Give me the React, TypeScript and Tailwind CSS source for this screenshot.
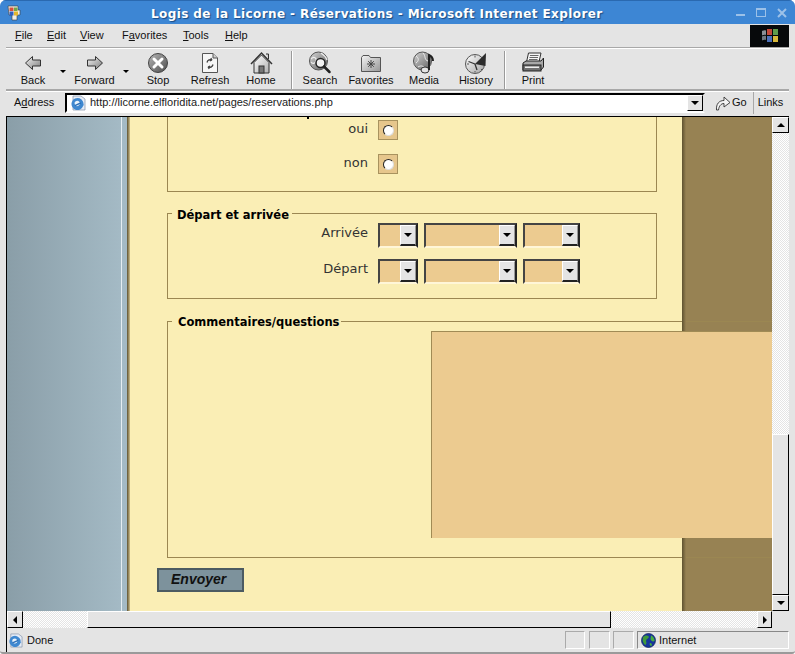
import React from 'react';

const ui = "font-['Liberation_Sans',Arial,sans-serif]";
const page = "font-['DejaVu_Sans',Verdana,sans-serif]";
const dither = 'bg-[repeating-conic-gradient(#e4e4e4_0_25%,#ffffff_0_50%)] bg-[length:2px_2px]';
const raised = 'bg-[#e4e4e4] border border-t-white border-l-white border-r-black border-b-black';

const Grad: React.FC<{ id: string; a?: string; b?: string }> = ({ id, a = '#f4f4f4', b = '#7c7c7c' }) => (
  <defs>
    <linearGradient id={id} x1="0" y1="0" x2="1" y2="1">
      <stop offset="0" stopColor={a} />
      <stop offset="1" stopColor={b} />
    </linearGradient>
  </defs>
);

const BackIcon = () => (
  <svg width="24" height="24" viewBox="0 0 24 24">
    <Grad id="bk" />
    <path d="M4.500 12 L11.500 5.500 V9 H19.500 V15 H11.500 V18.500 Z" fill="url(#bk)" stroke="#333" strokeWidth="1" />
  </svg>
);

const ForwardIcon = () => (
  <svg width="24" height="24" viewBox="0 0 24 24">
    <Grad id="fw" />
    <path d="M19.500 12 L12.500 5.500 V9 H4.500 V15 H12.500 V18.500 Z" fill="url(#fw)" stroke="#333" strokeWidth="1" />
  </svg>
);

const StopIcon = () => (
  <svg width="24" height="24" viewBox="0 0 24 24">
    <Grad id="st" a="#b8b8b8" b="#4c4c4c" />
    <circle cx="12" cy="12" r="9.500" fill="url(#st)" stroke="#444" />
    <path d="M8 8 L16 16 M16 8 L8 16" stroke="#fff" strokeWidth="3" strokeLinecap="round" />
  </svg>
);

const RefreshIcon = () => (
  <svg width="24" height="24" viewBox="0 0 24 24">
    <path d="M4.500 2.500 H15 L19.500 7 V21.500 H4.500 Z" fill="#f6f6f6" stroke="#555" />
    <path d="M15 2.500 V7 H19.500" fill="#cfcfcf" stroke="#555" />
    <path d="M9 11.500 C9.500 9 12 8 14 9 M14 9 L12.800 7.200 M14 9 L11.800 10" fill="none" stroke="#444" strokeWidth="1.300" />
    <path d="M15 13.500 C14.500 16 12 17 10 16 M10 16 L11.300 17.800 M10 16 L12.200 15" fill="none" stroke="#444" strokeWidth="1.300" />
  </svg>
);

const HomeIcon = () => (
  <svg width="24" height="24" viewBox="0 0 24 24">
    <Grad id="hm" a="#ffffff" b="#b0b0b0" />
    <path d="M5 11.500 V22 H20 V11.500 L12.500 4 Z" fill="url(#hm)" stroke="#333" />
    <path d="M2 13 L12.500 2 L23 13" fill="none" stroke="#333" strokeWidth="1.500" />
    <path d="M17 3 H19.500 V8" fill="#ccc" stroke="#333" />
    <rect x="10" y="15" width="5" height="7" fill="#777" stroke="#333" />
  </svg>
);

const SearchIcon = () => (
  <svg width="24" height="24" viewBox="0 0 24 24">
    <Grad id="se" a="#d8d8d8" b="#5c5c5c" />
    <circle cx="10.500" cy="10" r="9" fill="url(#se)" stroke="#555" />
    <path d="M3 8 C6 5 9 7 8 10 C7 13 4 13 3 11 M13 2 C16 4 18 6 19 9" fill="none" stroke="#eee" strokeWidth="1.200" />
    <circle cx="12.500" cy="12" r="4.500" fill="#f2f2f2" stroke="#222" strokeWidth="1.500" />
    <path d="M16 15.500 L21.500 21" stroke="#222" strokeWidth="2.500" strokeLinecap="round" />
  </svg>
);

const FavoritesIcon = () => (
  <svg width="24" height="24" viewBox="0 0 24 24">
    <Grad id="fa" a="#f4f4f4" b="#969696" />
    <path d="M2.500 6.500 L4 4.500 H10 L11.500 6.500 H21.500 V20.500 H2.500 Z" fill="url(#fa)" stroke="#555" />
    <path d="M12 9 V17 M8 13 H16 M9.200 10.200 L14.800 15.800 M14.800 10.200 L9.200 15.800" stroke="#444" strokeWidth="1" />
  </svg>
);

const MediaIcon = () => (
  <svg width="24" height="24" viewBox="0 0 24 24">
    <Grad id="me" a="#d4d4d4" b="#606060" />
    <circle cx="10.500" cy="10" r="9" fill="url(#me)" stroke="#555" />
    <path d="M4 5 C7 7 7 10 4 12 M11 2 C14 5 12 9 16 10 M6 16 C9 14 12 15 13 18" fill="none" stroke="#eee" strokeWidth="1" />
    <ellipse cx="13" cy="19" rx="4" ry="3" fill="#e4e4e4" stroke="#333" />
    <path d="M17 19 V4 C19 5 21 6 21 10" fill="none" stroke="#222" strokeWidth="2" />
  </svg>
);

const HistoryIcon = () => (
  <svg width="24" height="24" viewBox="0 0 24 24">
    <Grad id="hi" a="#ffffff" b="#a4a4a4" />
    <circle cx="11" cy="13" r="9.500" fill="url(#hi)" stroke="#555" />
    <path d="M11 13 L22 2 L21.500 15 Z" fill="#2c2c2c" />
    <path d="M11 13 L4.500 10.500 M11 13 L13 19" stroke="#333" strokeWidth="1.300" />
    <path d="M11 4.500 V6.500 M3 13 H5 M11 20 V21.500 M17 18 L18 19" stroke="#555" />
  </svg>
);

const PrintIcon = () => (
  <svg width="24" height="24" viewBox="0 0 24 24">
    <path d="M7.500 2 H20 L18 11 H5.500 Z" fill="#f4f4f4" stroke="#333" />
    <path d="M9 4.500 H17.500 M8.500 6.500 H17 M8 8.500 H16.500" stroke="#666" />
    <path d="M2 12 L5 10 H20 L22.500 7 V16 L20 19 H2 Z" fill="#a8a8a8" stroke="#222" />
    <rect x="2" y="14" width="18" height="6" fill="#707070" stroke="#222" />
    <rect x="4" y="15.500" width="14" height="1.500" fill="#eee" />
  </svg>
);

const IeIcon: React.FC<{ size?: number }> = ({ size = 16 }) => (
  <svg width={size} height={size} viewBox="0 0 16 16">
    <path d="M3 1 H11 L15 4 V15 H3 Z" fill="#e6ecf6" stroke="#7f8fa8" strokeWidth="0.700" />
    <g transform="rotate(-25 7.500 9)">
      <circle cx="7.500" cy="9" r="6" fill="#3f88d0" />
      <circle cx="7.500" cy="8.400" r="2.600" fill="#e9f3fb" />
      <rect x="4.500" y="8.600" width="6.500" height="1.500" fill="#2b6fb8" />
      <path d="M9.500 10.500 L13.500 12.500 H7.500 Z" fill="#3f88d0" />
    </g>
  </svg>
);

const TitleIcon = () => (
  <svg width="14" height="16" viewBox="0 0 14 16">
    <path d="M1 1 H11 V5 H13 V10 H10 V15 H5 V10 H2 Z" fill="#f1efe6" stroke="#3a3a3a" strokeWidth="0.600" />
    <rect x="2.500" y="2.500" width="4" height="3.500" fill="#d8503a" />
    <rect x="7" y="2.500" width="3.500" height="3.500" fill="#6fa84a" />
    <rect x="2.500" y="6.500" width="4" height="4" fill="#2f5fc0" />
    <rect x="7" y="6.500" width="4" height="4" fill="#e5b82e" />
  </svg>
);

const GlobeIcon = () => (
  <svg width="15" height="15" viewBox="0 0 15 15">
    <circle cx="7.500" cy="7.500" r="7" fill="#16359c" />
    <path d="M2 4 C4 2 7 2 8 4 C7 6 5 6 5 8 C6 10 5 12 4 12 C2 10 1 7 2 4 Z" fill="#3f9a3a" />
    <path d="M10 2.500 C12 3 14 6 13.500 8 C12 9 10 8 9.500 6 Z M9 10 C10.500 10 11.500 11 10.500 13 C9 13 8 11.500 9 10 Z" fill="#48ad3f" />
    <circle cx="7.500" cy="7.500" r="7" fill="none" stroke="#0d1d5a" strokeWidth="0.700" />
  </svg>
);

const GoIcon = () => (
  <svg width="16" height="16" viewBox="0 0 16 16">
    <path d="M1.500 15 C1 9 4 5.500 9 5.500 V2 L15 7.500 L9 12 V8.500 C6 8.500 4 11 3.500 15 Z" fill="#f4f4f4" stroke="#333" strokeWidth="0.900" />
  </svg>
);

const FlagIcon = () => (
  <svg width="18" height="17" viewBox="0 0 18 17">
    <path d="M1 4 C3 3 4 3 5 3.500 V8 C4 7.500 3 7.500 1 8.500 Z" fill="#8a8f96" />
    <path d="M1 9.500 C3 8.500 4 8.500 5 9 V13 C4 12.500 3 12.500 1 13.500 Z" fill="#6f7780" />
    <rect x="6" y="2" width="5" height="6" fill="#c4483a" />
    <rect x="12" y="2" width="5" height="6" fill="#5f9c4c" />
    <rect x="6" y="9" width="5" height="6" fill="#4b6fb8" />
    <rect x="12" y="9" width="5" height="6" fill="#d8b83a" />
  </svg>
);

const Caret: React.FC<{ dir?: 'down' | 'up' | 'left' | 'right' }> = ({ dir = 'down' }) => {
  const d = { down: 'M0 0 H8 L4 4 Z', up: 'M0 4 H8 L4 0 Z', left: 'M6 -2 V6 L2 2 Z', right: 'M2 -2 V6 L6 2 Z' }[dir];
  return (
    <svg width="8" height="8" viewBox="0 -2 8 8">
      <path d={d} fill="#000" />
    </svg>
  );
};

const menus = [
  { w: 'w-[32px]', a: '', u: 'F', b: 'ile' },
  { w: 'w-[33px]', a: '', u: 'E', b: 'dit' },
  { w: 'w-[42px]', a: '', u: 'V', b: 'iew' },
  { w: 'w-[61px]', a: 'F', u: 'a', b: 'vorites' },
  { w: 'w-[42px]', a: '', u: 'T', b: 'ools' },
  { w: 'w-[30px]', a: '', u: 'H', b: 'elp' },
];

const ToolButton: React.FC<{ label: string; width: string; icon: React.ReactNode }> = ({ label, width, icon }) => (
  <div className={`${width} flex flex-col items-center`}>
    <div className="h-[24px] flex items-center justify-center">{icon}</div>
    <span className="-mt-[1px] text-[11px] leading-[13px] text-[#111]">{label}</span>
  </div>
);

const ToolSep: React.FC<{ width: string }> = ({ width }) => (
  <div className={`${width} flex justify-center self-stretch`}>
    <div className="w-[1px] h-[38px] bg-[#9a9a9a] border-r border-white box-content" />
  </div>
);

const DropArrow: React.FC = () => (
  <div className="w-[6px] h-[24px] flex items-end justify-center self-start">
    <span className="w-0 h-0 border-x-[3px] border-x-transparent border-t-[3px] border-t-black mb-[2px]" />
  </div>
);

const Radio: React.FC = () => (
  <div className="w-[20px] h-[20px] bg-[#e6c68c] border border-[#a8925e] flex items-center justify-center">
    <div className="w-[11px] h-[11px] rounded-full bg-white border border-t-[#222] border-l-[#222] border-r-[#ddd] border-b-[#ddd]" />
  </div>
);

const Select: React.FC<{ width: string }> = ({ width }) => (
  <div className={`${width} h-[25px] bg-[#eccb90] border border-t-2 border-l-2 border-t-[#444] border-l-[#444] border-r-2 border-r-[#222] border-b-2 border-b-[#fff6d8] flex justify-end`}>
    <div className="w-[16px] bg-[#e4e4e4] border border-t-white border-l-white border-r-[#999] border-b-2 border-b-[#222] flex items-center justify-center">
      <Caret />
    </div>
  </div>
);

const DateRow: React.FC<{ label: string }> = ({ label }) => (
  <div className="flex items-center h-[25px]">
    <span className="w-[210px] pr-[10px] pb-[6px] text-right text-[13px] text-[#333]">{label}</span>
    <div className="flex gap-[6px]">
      <Select width="w-[40px]" />
      <Select width="w-[93px]" />
      <Select width="w-[57px]" />
    </div>
  </div>
);

const RadioRow: React.FC<{ label: string }> = ({ label }) => (
  <div className="flex items-center h-[20px]">
    <span className="w-[210px] pr-[10px] pb-[2px] text-right text-[13px] text-[#333]">{label}</span>
    <Radio />
  </div>
);

const App: React.FC = () => (
  <div className={`${ui} w-[795px] h-[654px] overflow-hidden bg-white`}>
    <div className="w-full h-full flex flex-col bg-[#e4e4e4] rounded-t-[6px] rounded-b-[3px] overflow-hidden border-b-2 border-[#9a9a9a]">
      {/* title bar */}
      <div className="h-[24px] shrink-0 bg-[#3d86d4] border-t border-[#2a69b0] flex items-center relative pl-[7px]">
        <TitleIcon />
        <span className={`${page} absolute left-[151px] top-[5px] text-[12px] leading-[16px] font-bold tracking-[0.4px] text-white [text-shadow:1px_1px_1px_#1c4a80] whitespace-nowrap`}>
          Logis de la Licorne - Réservations - Microsoft Internet Explorer
        </span>
        <div className="ml-auto flex items-center gap-[11px] pr-[8px] text-[#9cc1e8]">
          <span className="w-[9px] h-[2px] mt-[5px] bg-[#9cc1e8]" />
          <span className="w-[10px] h-[9px] border border-t-2 border-[#9cc1e8]" />
          <svg width="10" height="10" viewBox="0 0 10 10">
            <path d="M1 1 L9 9 M9 1 L1 9" stroke="#9cc1e8" strokeWidth="2" />
          </svg>
        </div>
      </div>

      {/* menu bar */}
      <div className="h-[24px] shrink-0 mx-[6px] flex items-center border-b border-[#a8a8a8]">
        <div className="flex pl-[9px] text-[11px] text-[#111]">
          {menus.map((m, i) => (
            <span key={i} className={m.w}>
              {m.a}
              <u>{m.u}</u>
              {m.b}
            </span>
          ))}
        </div>
        <div className="ml-auto w-[39px] h-[22px] bg-[#07090b] flex items-center justify-center">
          <FlagIcon />
        </div>
      </div>

      {/* toolbar */}
      <div className="h-[43px] shrink-0 mx-[6px] flex items-start pt-[2px] border-t border-white border-b-2 border-b-[#a8a8a8]">
        <ToolButton label="Back" width="w-[54px]" icon={<BackIcon />} />
        <DropArrow />
        <ToolButton label="Forward" width="w-[57px]" icon={<ForwardIcon />} />
        <DropArrow />
        <ToolButton label="Stop" width="w-[58px]" icon={<StopIcon />} />
        <ToolButton label="Refresh" width="w-[46px]" icon={<RefreshIcon />} />
        <ToolButton label="Home" width="w-[56px]" icon={<HomeIcon />} />
        <ToolSep width="w-[5px]" />
        <ToolButton label="Search" width="w-[52px]" icon={<SearchIcon />} />
        <ToolButton label="Favorites" width="w-[50px]" icon={<FavoritesIcon />} />
        <ToolButton label="Media" width="w-[56px]" icon={<MediaIcon />} />
        <ToolButton label="History" width="w-[48px]" icon={<HistoryIcon />} />
        <ToolSep width="w-[10px]" />
        <ToolButton label="Print" width="w-[46px]" icon={<PrintIcon />} />
      </div>

      {/* address bar */}
      <div className="h-[25px] shrink-0 mx-[6px] pb-[3px] flex items-center text-[11px] text-[#111] border-t border-white">
        <span className="w-[59px] pl-[8px]">
          A<u>d</u>dress
        </span>
        <div className="w-[640px] h-[20px] bg-white border-2 border-t-black border-l-black border-r-[#e4e4e4] border-b-white flex items-center pl-[3px]">
          <IeIcon />
          <span className="ml-[4px] text-[#222]">http://licorne.elfloridita.net/pages/reservations.php</span>
          <div className={`ml-auto w-[16px] h-[16px] ${raised} flex items-center justify-center`}>
            <Caret />
          </div>
        </div>
        <div className="ml-[10px] flex items-center gap-[1px]">
          <GoIcon />
          <span>Go</span>
        </div>
        <div className="ml-[6px] w-[1px] h-[22px] bg-[#a8a8a8]" />
        <span className="ml-[4px]">Links</span>
      </div>

      {/* browser viewport */}
      <div className="flex-1 min-h-0 ml-[6px] mr-[6px] flex flex-col border-t border-l border-black">
        <div className="h-[494px] shrink-0 flex">
          <div className={`${page} w-[765px] flex overflow-hidden text-[#222] bg-[#978253]`}>
            <div className="w-[114px] shrink-0 bg-gradient-to-r from-[#8a9ea8] to-[#a4bac5]" />
            <div className="w-[1px] shrink-0 bg-[#e6eef2]" />
            <div className="w-[5px] shrink-0 bg-[#a4bac5]" />
            <div className="w-[3px] shrink-0 bg-gradient-to-r from-[#5f5230] to-[#cfc08c]" />

            <div className="w-[552px] shrink-0 bg-[#faeeb5] pl-[37px]">
              <fieldset className="relative w-[490px] h-[75px] border border-t-0 border-[#9b8752] pt-[3px] flex flex-col gap-[14px]">
                {/* tail of the legend scrolled out above the viewport */}
                <span className="absolute left-[139px] top-0 w-[2px] h-[2px] bg-black" />
                <RadioRow label="oui" />
                <RadioRow label="non" />
              </fieldset>

              <fieldset className="w-[490px] h-[95px] mt-[12px] border border-[#9b8752] pt-[1px] flex flex-col gap-[11px]">
                <legend className="ml-[4px] pl-[5px] pr-[3px] pt-[4px] text-[11.5px] leading-[14px] font-bold text-black">Départ et arrivée</legend>
                <DateRow label="Arrivée" />
                <DateRow label="Départ" />
              </fieldset>

              <fieldset className="w-[515px] h-[246px] mt-[13px] border border-r-0 border-[#9b8752]">
                <legend className="ml-[4px] pl-[6px] pr-[2px] pt-[3px] pb-[1px] text-[11.5px] leading-[14px] font-bold text-black">Commentaires/questions</legend>
                <div className="relative z-10 w-[360px] h-[207px] mt-[1px] ml-[263px] bg-[#eccb90] border-t border-l border-[#a08b55]" />
              </fieldset>

              <button className="w-[87px] h-[24px] -ml-[10px] mt-[10px] pb-[2px] bg-[#7d929c] border-2 border-[#4c5b62] text-left pl-[12px] font-['Liberation_Sans',Arial,sans-serif] text-[14px] leading-[18px] font-bold italic text-[#111]">
                Envoyer
              </button>
            </div>

            <div className="w-[4px] shrink-0 bg-gradient-to-r from-[#5f5230] to-[#978253]" />
          </div>

          {/* vertical scrollbar */}
          <div className="w-[17px] shrink-0 flex flex-col">
            <div className={`h-[16px] ${raised} flex items-center justify-center`}>
              <Caret dir="up" />
            </div>
            <div className={`h-[301px] ${dither}`} />
            <div className="h-[161px] bg-[#e4e4e4] border border-t-white border-l-white border-r-black border-b-black" />
            <div className={`h-[16px] ${raised} flex items-center justify-center`}>
              <Caret />
            </div>
          </div>
        </div>

        {/* horizontal scrollbar */}
        <div className="h-[17px] shrink-0 flex">
          <div className={`w-[16px] ${raised} flex items-center justify-center`}>
            <Caret dir="left" />
          </div>
          <div className={`w-[64px] ${dither}`} />
          <div className="w-[524px] bg-[#e4e4e4] border border-t-white border-l-white border-r-black border-b-black" />
          <div className={`w-[146px] ${dither}`} />
          <div className={`w-[15px] ${raised} flex items-center justify-center`}>
            <Caret dir="right" />
          </div>
          <div className="w-[17px] bg-[#e4e4e4]" />
        </div>

        {/* status bar */}
        <div className="h-[20px] shrink-0 -ml-[1px] mt-[2px] flex items-center text-[11px] text-[#111]">
          <div className="pl-[2px] flex items-center gap-[4px] w-[559px]">
            <IeIcon size={15} />
            <span>Done</span>
          </div>
          <div className="w-[20px] h-[18px] border border-t-[#aaa] border-l-[#aaa] border-r-white border-b-white" />
          <div className="w-[21px] h-[18px] ml-[4px] border border-t-[#aaa] border-l-[#aaa] border-r-white border-b-white" />
          <div className="w-[21px] h-[18px] ml-[3px] border border-t-[#aaa] border-l-[#aaa] border-r-white border-b-white" />
          <div className="flex-1 h-[18px] ml-[3px] pl-[3px] flex items-center gap-[3px] border border-t-[#888] border-l-[#888] border-r-white border-b-white">
            <GlobeIcon />
            <span>Internet</span>
          </div>
        </div>
      </div>
    </div>
  </div>
);

export default App;
